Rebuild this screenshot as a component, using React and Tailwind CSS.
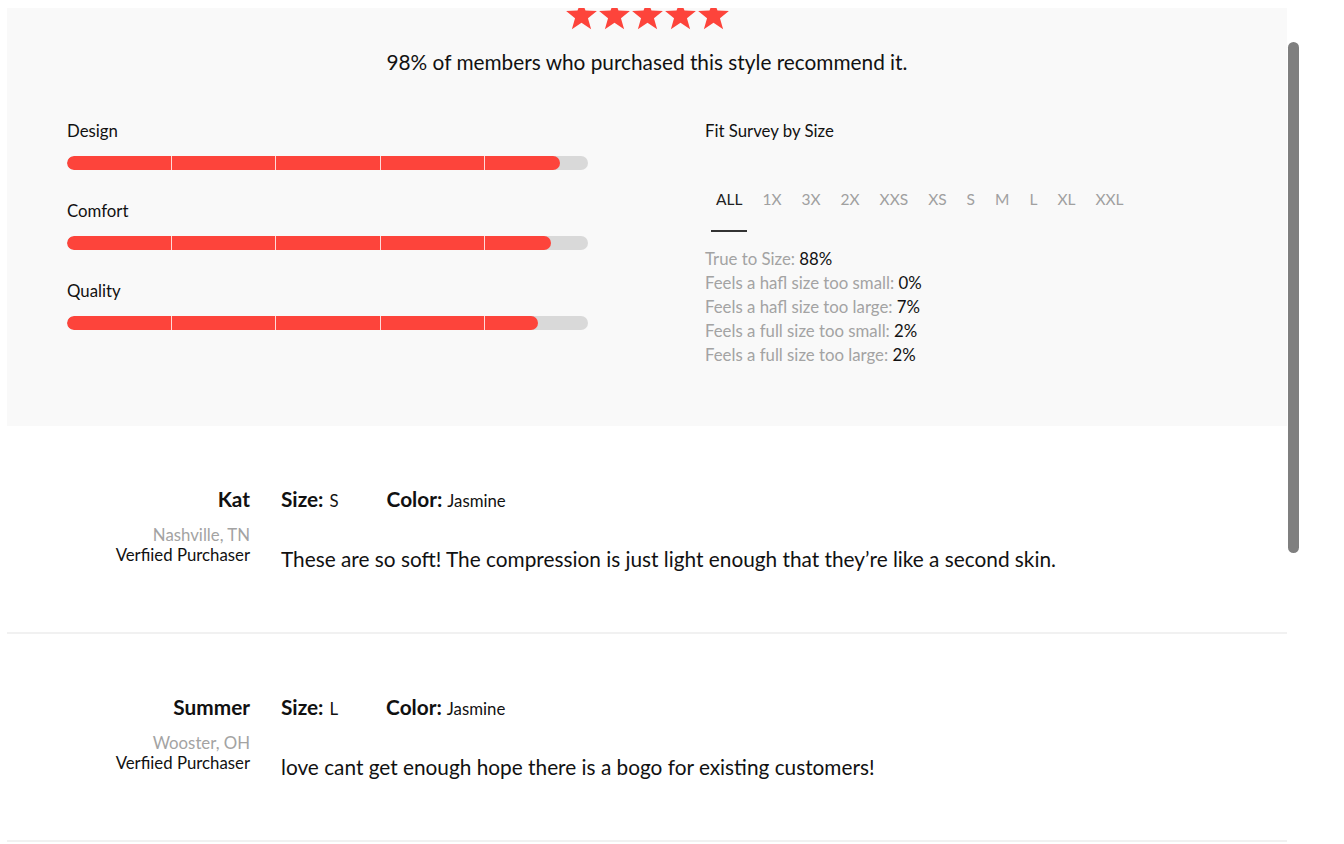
import React from "react";

const RED = "#fd443b";

const ratings = [
    { label: "Design", value: 94.6 },
    { label: "Comfort", value: 92.9 },
    { label: "Quality", value: 90.4 },
];

const sizes = ["ALL", "1X", "3X", "2X", "XXS", "XS", "S", "M", "L", "XL", "XXL"];

const survey = [
    { label: "True to Size:", value: "88%" },
    { label: "Feels a hafl size too small:", value: "0%" },
    { label: "Feels a hafl size too large:", value: "7%" },
    { label: "Feels a full size too small:", value: "2%" },
    { label: "Feels a full size too large:", value: "2%" },
];

const reviews = [
    {
        name: "Kat",
        location: "Nashville, TN",
        size: "S",
        color: "Jasmine",
        text: "These are so soft! The compression is just light enough that they\u2019re like a second skin.",
    },
    {
        name: "Summer",
        location: "Wooster, OH",
        size: "L",
        color: "Jasmine",
        text: "love cant get enough hope there is a bogo for existing customers!",
    },
];

function Star() {
    return (
        <svg width="33" height="32" viewBox="0 0 24 23">
            <polygon
                fill={RED}
                points="12,0.5 14.9,8.3 23.2,8.6 16.7,13.8 19,21.8 12,17.2 5,21.8 7.3,13.8 0.8,8.6 9.1,8.3"
            />
        </svg>
    );
}

function RatingBar({ label, value }) {
    return (
        <div className="flex flex-col">
            <div className="text-[16.8px] leading-[24px] text-[#111]">{label}</div>
            <div className="relative mt-[13px] h-[14px] w-full overflow-hidden rounded-full bg-[#d9d9d9]">
                <div
                    className="h-full rounded-full"
                    style={{ width: `${value}%`, backgroundColor: RED }}
                />
                {[1, 2, 3, 4].map((i) => (
                    <div
                        key={i}
                        className="absolute top-0 h-full w-px bg-white/80"
                        style={{ left: `${i * 20}%` }}
                    />
                ))}
            </div>
        </div>
    );
}

function Review({ review }) {
    return (
        <div className="flex gap-[31px] border-b-2 border-[#f1f1f1] pt-[59px] pb-[59px]">
            <div className="flex w-[243px] flex-col items-end text-right">
                <div className="text-[20.8px] font-bold leading-[28px] text-[#111]">{review.name}</div>
                <div className="mt-[12px] text-[16.8px] leading-[20px] text-[#a3a3a3]">{review.location}</div>
                <div className="text-[16.8px] leading-[20px] text-[#111]">Verfiied Purchaser</div>
            </div>
            <div className="flex flex-col">
                <div className="flex h-[28px] items-center gap-[48px] text-[#111]">
                    <div className="h-[28px] leading-[28px]">
                        <span className="text-[20.8px] font-bold">Size:</span>
                        <span className="ml-[6px] text-[16.8px]">{review.size}</span>
                    </div>
                    <div className="h-[28px] leading-[28px]">
                        <span className="text-[20.8px] font-bold">Color:</span>
                        <span className="ml-[5px] text-[16.8px]">{review.color}</span>
                    </div>
                </div>
                <div className="mt-[32px] text-[20.8px] leading-[28px] text-[#111]">{review.text}</div>
            </div>
        </div>
    );
}

export default function App() {
    return (
        <div
            className="relative min-h-[844px] w-full overflow-hidden bg-white"
            style={{ fontFamily: "Lato, 'Open Sans', sans-serif" }}
        >
            <div className="ml-[7px] w-[1280px] pt-[8px]">
                {/* summary panel */}
                <div className="flex h-[418px] flex-col overflow-hidden bg-[#f9f9f9]">
                    <div className="-mt-[9px] flex justify-center">
                        {[0, 1, 2, 3, 4].map((i) => (
                            <Star key={i} />
                        ))}
                    </div>
                    <div className="mt-[17px] text-center text-[20.8px] leading-[28px] text-[#111]">
                        98% of members who purchased this style recommend it.
                    </div>

                    <div className="mt-[43px] flex gap-[117px] pl-[60px]">
                        <div className="flex w-[521px] flex-col gap-[29px]">
                            {ratings.map((r) => (
                                <RatingBar key={r.label} {...r} />
                            ))}
                        </div>

                        <div className="flex flex-col">
                            <div className="text-[16.8px] leading-[24px] text-[#111]">Fit Survey by Size</div>
                            <div className="mt-[44px] flex gap-[10px] pl-[6px]">
                                {sizes.map((s, i) => (
                                    <div
                                        key={s}
                                        className={
                                            i === 0
                                                ? "border-b-2 border-[#333] px-[5px] pb-[19px] text-[15.5px] leading-[24px] text-[#222]"
                                                : "px-[5px] pb-[19px] text-[15.5px] leading-[24px] text-[#a0a0a0]"
                                        }
                                    >
                                        {s}
                                    </div>
                                ))}
                            </div>
                            <div className="mt-[15px] flex flex-col">
                                {survey.map((row) => (
                                    <div key={row.label} className="text-[16.8px] leading-[24px]">
                                        <span className="text-[#a3a3a3]">{row.label} </span>
                                        <span className="text-[#111]">{row.value}</span>
                                    </div>
                                ))}
                            </div>
                        </div>
                    </div>
                </div>

                {/* reviews */}
                {reviews.map((r) => (
                    <Review key={r.name} review={r} />
                ))}
            </div>

            {/* scrollbar thumb */}
            <div className="absolute left-[1288px] top-[42px] h-[511px] w-[11px] rounded-full bg-[#7f7f7f]" />
        </div>
    );
}
